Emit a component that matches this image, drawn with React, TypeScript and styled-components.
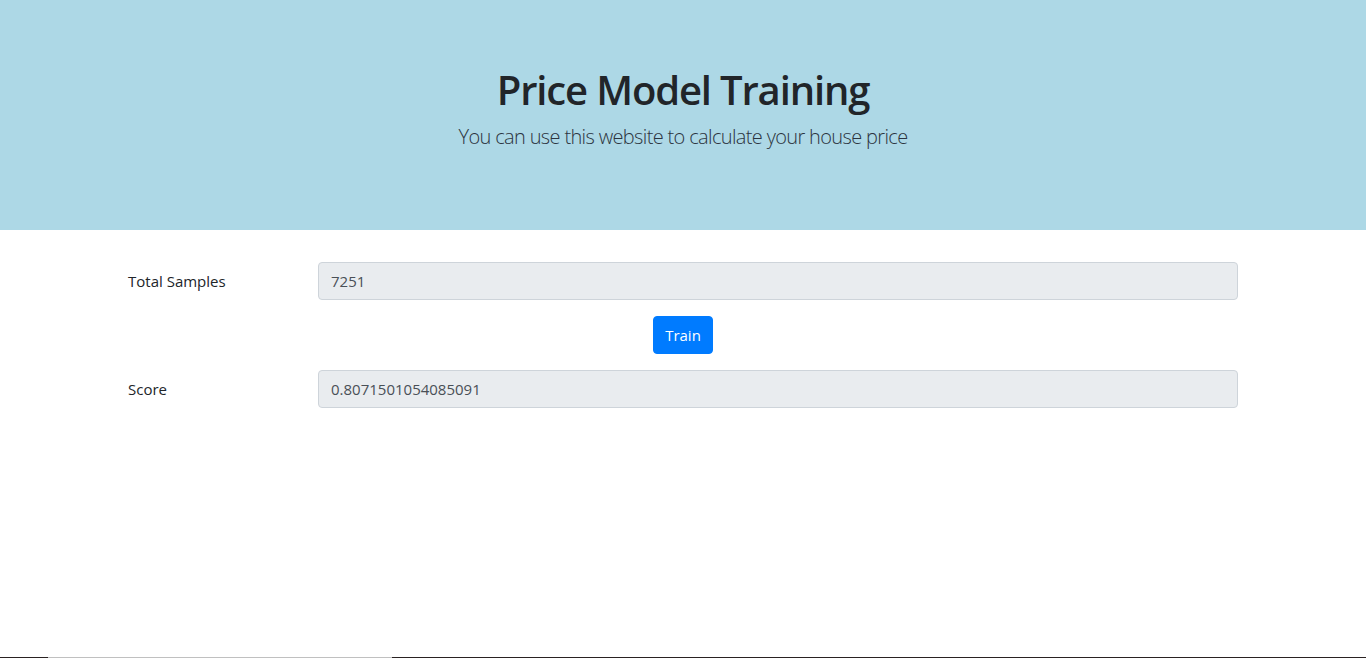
import React from "react";
import styled, { createGlobalStyle } from "styled-components";

const GlobalStyle = createGlobalStyle`
  * { box-sizing: border-box; }
  html, body { margin: 0; padding: 0; }
  body {
    font-family: "Open Sans", "Noto Sans", sans-serif;
    font-size: 16px;
    line-height: 1.5;
    color: #212529;
    background: #fff;
  }
`;

const Page = styled.div`
  min-height: 100vh;
  display: flex;
  flex-direction: column;
`;

const Jumbotron = styled.header`
  background: #add8e6;
  padding: 66px 32px 62px;
  margin-bottom: 32px;
  text-align: center;
`;

const Title = styled.h1`
  margin: 0 0 8px;
  font-size: 40px;
  font-weight: 600;
  line-height: 1.2;
  letter-spacing: -1.15px;
`;

const Lead = styled.p`
  margin: 0 0 16px;
  font-size: 20px;
  font-weight: 300;
  line-height: 1.5;
  letter-spacing: -0.65px;
  color: #2c3440;
`;

const Container = styled.main`
  width: 100%;
  max-width: 1140px;
  margin: 0 auto;
  padding: 0 15px;
  flex: 1;
`;

const FormRow = styled.div`
  display: grid;
  grid-template-columns: 190px 1fr;
  margin-bottom: 16px;
`;

const Label = styled.label`
  padding: 7px 0;
  font-size: 15px;
  line-height: 24px;
`;

const Input = styled.input`
  width: 100%;
  height: 38px;
  padding: 6px 12px;
  font-family: inherit;
  font-size: 15px;
  line-height: 1.5;
  color: #495057;
  background: #e9ecef;
  border: 1px solid #ced4da;
  border-radius: 4px;
  outline: none;
`;

const Center = styled.div`
  display: flex;
  justify-content: center;
  margin-bottom: 16px;
`;

const Button = styled.button`
  height: 38px;
  padding: 6px 11px;
  font-family: inherit;
  font-size: 15px;
  line-height: 1.5;
  color: #fff;
  background: #007bff;
  border: 1px solid #007bff;
  border-radius: 4px;
  cursor: pointer;
`;

const BottomEdge = styled.div`
  display: flex;
  height: 1px;
`;

const Seg = styled.div<{ $w?: number; $grey?: boolean }>`
  background: ${(p) => (p.$grey ? "#c0c0c0" : "#2a2222")};
  ${(p) => (p.$w ? `width: ${p.$w}px;` : "flex: 1;")}
`;

export default function App() {
  return (
    <Page>
      <GlobalStyle />
      <Jumbotron>
        <Title>Price Model Training</Title>
        <Lead>You can use this website to calculate your house price</Lead>
      </Jumbotron>
      <Container>
        <FormRow>
          <Label>Total Samples</Label>
          <Input readOnly value="7251" />
        </FormRow>
        <Center>
          <Button>Train</Button>
        </Center>
        <FormRow>
          <Label>Score</Label>
          <Input readOnly value="0.8071501054085091" />
        </FormRow>
      </Container>
      <BottomEdge>
        <Seg $w={48} />
        <Seg $w={344} $grey />
        <Seg />
      </BottomEdge>
    </Page>
  );
}
